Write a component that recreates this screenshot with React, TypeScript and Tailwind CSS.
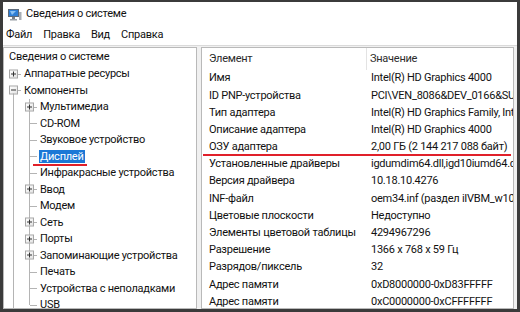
import React from 'react'

const font = "font-['Roboto','Liberation_Sans',sans-serif] tracking-[-0.25px]"

type Kind = 'plus' | 'minus' | 'leaf'

const tree: { label: string; level: number; kind: Kind; selected?: boolean; last?: boolean }[] = [
  { label: 'Аппаратные ресурсы', level: 1, kind: 'plus' },
  { label: 'Компоненты', level: 1, kind: 'minus' },
  { label: 'Мультимедиа', level: 2, kind: 'plus' },
  { label: 'CD-ROM', level: 2, kind: 'leaf' },
  { label: 'Звуковое устройство', level: 2, kind: 'leaf' },
  { label: 'Дисплей', level: 2, kind: 'leaf', selected: true },
  { label: 'Инфракрасные устройства', level: 2, kind: 'leaf' },
  { label: 'Ввод', level: 2, kind: 'plus' },
  { label: 'Модем', level: 2, kind: 'leaf' },
  { label: 'Сеть', level: 2, kind: 'plus' },
  { label: 'Порты', level: 2, kind: 'plus' },
  { label: 'Запоминающие устройства', level: 2, kind: 'plus' },
  { label: 'Печать', level: 2, kind: 'leaf' },
  { label: 'Устройства с неполадками', level: 2, kind: 'leaf' },
  { label: 'USB', level: 2, kind: 'leaf', last: true },
]

const rows: [string, string][] = [
  ['Имя', 'Intel(R) HD Graphics 4000'],
  ['ID PNP-устройства', 'PCI\\VEN_8086&DEV_0166&SUBSYS_21F317AA&REV_09'],
  ['Тип адаптера', 'Intel(R) HD Graphics Family, Intel Corporation'],
  ['Описание адаптера', 'Intel(R) HD Graphics 4000'],
  ['ОЗУ адаптера', '2,00 ГБ (2 144 217 088 байт)'],
  ['Установленные драйверы', 'igdumdim64.dll,igd10iumd64.dll'],
  ['Версия драйвера', '10.18.10.4276'],
  ['INF-файл', 'oem34.inf (раздел iIVBM_w10)'],
  ['Цветовые плоскости', 'Недоступно'],
  ['Элементы цветовой таблицы', '4294967296'],
  ['Разрешение', '1366 x 768 x 59 Гц'],
  ['Разрядов/пиксель', '32'],
  ['Адрес памяти', '0xD8000000-0xD83FFFFF'],
  ['Адрес памяти', '0xC0000000-0xCFFFFFFF'],
]

const Box = ({ minus }: { minus?: boolean }) => (
  <span className="absolute left-[4px] top-1/2 -translate-y-1/2 w-[9px] h-[9px] border border-[#a6a6a6] bg-gradient-to-br from-white to-[#e3e3e3] flex items-center justify-center">
    <span className="absolute w-[5px] h-px bg-[#333]" />
    {!minus && <span className="absolute w-px h-[5px] bg-[#333]" />}
  </span>
)

const TreeRow = ({ label, level, kind, selected, last }: (typeof tree)[number]) => (
  <div className="flex h-[16.5px] items-center">
    {level === 2 && (
      <span className="relative w-[16px] h-full shrink-0">
        <span className="absolute left-[8px] top-0 bottom-0 w-px bg-[#b4b4b4]" />
      </span>
    )}
    <span className="relative w-[16px] h-full shrink-0">
      {level === 2 && (
        <span className={`absolute left-[8px] top-0 w-px bg-[#b4b4b4] ${last ? 'h-1/2' : 'bottom-0'}`} />
      )}
      {level === 1 && kind === 'minus' && (
        <span className="absolute left-[8px] top-1/2 bottom-0 w-px bg-[#b4b4b4]" />
      )}
      <span className="absolute left-[9px] right-0 top-1/2 h-px bg-[#b4b4b4]" />
      {kind !== 'leaf' && <Box minus={kind === 'minus'} />}
    </span>
    <span
      className={`ml-[2px] px-[1px] leading-[13px] whitespace-nowrap ${
        selected ? 'bg-[#1b78d6] text-white' : 'text-[#111]'
      }`}
    >
      {label}
    </span>
  </div>
)

const PcIcon = () => (
  <svg width="15" height="13" viewBox="0 0 15 13">
    <rect x="1" y="1" width="11" height="8" fill="#5d6a7a" />
    <rect x="2" y="2" width="9" height="6" fill="#2f7fd6" />
    <path d="M3 3 L9 3 L5 7 Z" fill="#8cc2f2" />
    <rect x="5" y="9" width="3" height="2" fill="#7a7f86" />
    <rect x="3" y="11" width="7" height="1.5" fill="#9aa0a6" />
    <rect x="12" y="4" width="2.5" height="8" fill="#a8aeb5" />
  </svg>
)

export default function App() {
  return (
    <div className={`relative w-[520px] h-[312px] bg-[#3b3b3b] pl-[3px] pt-[2px] pr-[3px] pb-[3px] ${font}`}>
      <div className="flex flex-col h-full bg-white">
        <div className="flex items-center h-[25px] pl-[4px] gap-[4px] text-[11px] text-[#111]">
          <PcIcon />
          <span>Сведения о системе</span>
        </div>
        <div className="flex items-center h-[17px] pl-[3px] gap-[11px] text-[11px] text-[#111]">
          <span>Файл</span>
          <span>Правка</span>
          <span>Вид</span>
          <span>Справка</span>
        </div>
        <div className="flex flex-1 min-h-0 gap-[4px] mt-[1px] border-t border-[#dadada] bg-[#f0f0f0] pt-[1px] pr-[3px]">
          <div className="w-[194px] border border-[#b9b9b9] bg-white pl-[1px] pt-px text-[11px] overflow-hidden">
            <div className="h-[16.5px] flex items-center pl-[4px] text-[#111] whitespace-nowrap">Сведения о системе</div>
            {tree.map((t, i) => (
              <TreeRow key={i} {...t} />
            ))}
          </div>
          <div className="flex-1 border border-[#b9b9b9] bg-white text-[11px] text-[#111] overflow-hidden">
            <div className="flex h-[22px] items-center text-[#2b2b2b]">
              <div className="w-[165px] pl-[7px] h-full flex items-center border-r border-[#e3e3e3]">Элемент</div>
              <div className="pl-[3px]">Значение</div>
            </div>
            {rows.map(([k, v], i) => (
              <div key={i} className="flex h-[17.2px] items-center whitespace-nowrap">
                <div className="w-[166px] shrink-0 pl-[7px]">{k}</div>
                <div className="pl-[3px]">{v}</div>
              </div>
            ))}
          </div>
        </div>
      </div>
      <div className="absolute left-[33px] top-[164px] w-[54px] h-[2px] bg-[#e0202a]" />
      <div className="absolute left-[203px] top-[154px] w-[308px] h-[2px] bg-[#e0202a]" />
    </div>
  )
}
